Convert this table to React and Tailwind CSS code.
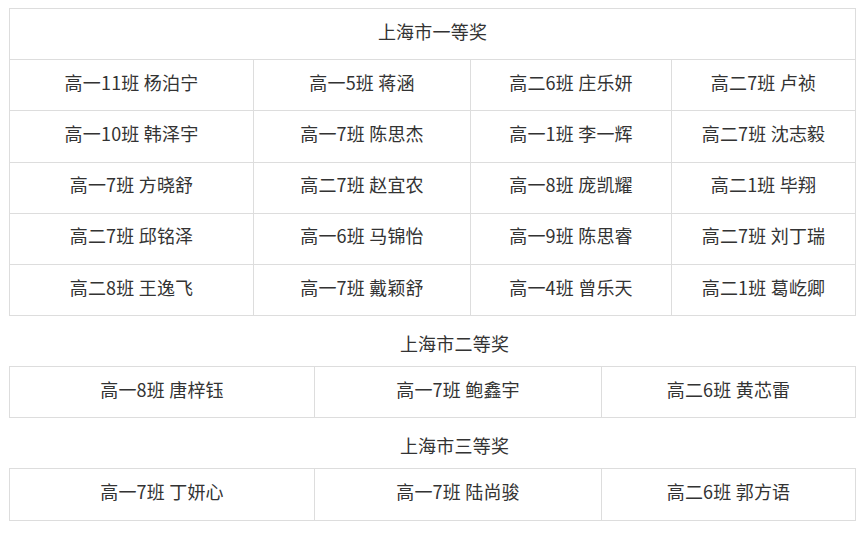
import React from "react";

const first = [
  ["高一11班 杨泊宁", "高一5班 蒋涵", "高二6班 庄乐妍", "高二7班 卢祯"],
  ["高一10班 韩泽宇", "高一7班 陈思杰", "高一1班 李一辉", "高二7班 沈志毅"],
  ["高一7班 方晓舒", "高二7班 赵宜农", "高一8班 庞凯耀", "高二1班 毕翔"],
  ["高二7班 邱铭泽", "高一6班 马锦怡", "高一9班 陈思睿", "高二7班 刘丁瑞"],
  ["高二8班 王逸飞", "高一7班 戴颖舒", "高一4班 曾乐天", "高二1班 葛屹卿"],
];

const second = ["高一8班 唐梓钰", "高一7班 鲍鑫宇", "高二6班 黄芯雷"];
const third = ["高一7班 丁妍心", "高一7班 陆尚骏", "高二6班 郭方语"];

const Cell = ({ children }) => (
  <div className="h-[51.2px] pb-[6px] flex items-center justify-center border-r border-b border-[#dddddd]">
    {children}
  </div>
);

const SectionTitle = ({ children }) => (
  <div className="h-[50px] pt-[15px] pl-[44px] leading-[24px] text-center">{children}</div>
);

export default function App() {
  return (
    <div
      className="bg-white min-h-screen px-[9px] pt-[8px] text-[18px] text-[#333333] tracking-[0.2px]"
      style={{ fontFamily: '"Noto Sans CJK SC", "Noto Sans", sans-serif' }}
    >
      {/* 一等奖 */}
      <div className="w-[847px] border-l border-t border-[#dddddd]">
        <Cell>上海市一等奖</Cell>
        <div className="grid grid-cols-[244px_217px_201px_184px]">
          {first.flat().map((name, i) => (
            <Cell key={i}>{name}</Cell>
          ))}
        </div>
      </div>

      {/* 二等奖 */}
      <SectionTitle>上海市二等奖</SectionTitle>
      <div className="w-[847px] border-l border-t border-[#dddddd] grid grid-cols-[305px_287px_254px]">
        {second.map((name, i) => (
          <Cell key={i}>{name}</Cell>
        ))}
      </div>

      {/* 三等奖 */}
      <SectionTitle>上海市三等奖</SectionTitle>
      <div className="w-[847px] border-l border-t border-[#dddddd] grid grid-cols-[305px_287px_254px]">
        {third.map((name, i) => (
          <Cell key={i}>{name}</Cell>
        ))}
      </div>
    </div>
  );
}
